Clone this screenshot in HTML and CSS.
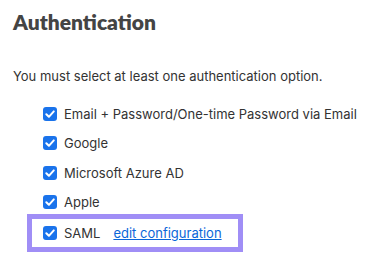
FILE: index.html
```html
<!DOCTYPE html>
<html>
<head>
<meta charset="utf-8">
<link rel="stylesheet" href="styles.css">
</head>
<body>
<main class="page">
  <h1 class="title">Authentication</h1>
  <p class="intro">You must select at least one authentication option.</p>
  <ul class="options">
    <li class="option"><span class="check"><svg viewBox="0 0 14 14"><path d="M3.3 7.2 L5.9 9.8 L10.8 4.4" /></svg></span><span class="label">Email + Password/One-time Password via Email</span></li>
    <li class="option"><span class="check"><svg viewBox="0 0 14 14"><path d="M3.3 7.2 L5.9 9.8 L10.8 4.4" /></svg></span><span class="label">Google</span></li>
    <li class="option"><span class="check"><svg viewBox="0 0 14 14"><path d="M3.3 7.2 L5.9 9.8 L10.8 4.4" /></svg></span><span class="label">Microsoft Azure AD</span></li>
    <li class="option"><span class="check"><svg viewBox="0 0 14 14"><path d="M3.3 7.2 L5.9 9.8 L10.8 4.4" /></svg></span><span class="label">Apple</span></li>
    <li class="option highlighted"><span class="check"><svg viewBox="0 0 14 14"><path d="M3.3 7.2 L5.9 9.8 L10.8 4.4" /></svg></span><span class="label">SAML</span><a class="edit-link" href="#">edit configuration</a></li>
  </ul>
</main>
</body>
</html>
```

FILE: styles.css
```css
html, body {
  margin: 0;
  padding: 0;
  background: #ffffff;
}
.page {
  padding: 8px 0 0 13px;
  font-family: Inter, "Noto Sans", sans-serif;
  color: #333333;
}
.title {
  margin: 0;
  font-family: Lato, sans-serif;
  font-weight: 800;
  font-size: 21px;
  line-height: 28px;
  color: #444444;
}
.intro {
  margin: 31px 0 0 0;
  font-size: 13px;
  line-height: 18px;
  color: #333333;
}
.options {
  list-style: none;
  margin: 20px 0 0 0;
  padding: 0;
  display: flex;
  flex-direction: column;
  gap: 11.3px;
}
.option {
  display: flex;
  align-items: center;
  height: 18px;
  padding-left: 30px;
  font-size: 13px;
  line-height: 18px;
}
.check {
  width: 14px;
  height: 14px;
  border-radius: 3px;
  background: #1a73eb;
  display: inline-flex;
  flex: none;
  margin-right: 7px;
}
.check svg {
  width: 14px;
  height: 14px;
}
.check path {
  fill: none;
  stroke: #ffffff;
  stroke-width: 2;
  stroke-linecap: round;
  stroke-linejoin: round;
}
.highlighted {
  margin-left: 14px;
  margin-top: -8px;
  padding: 5px 0 5px 11px;
  width: 195px;
  border: 5px solid #a08ef6;
  box-sizing: content-box;
}
.edit-link {
  margin-left: 13px;
  color: #0a66d9;
  text-decoration: underline;
}
```
